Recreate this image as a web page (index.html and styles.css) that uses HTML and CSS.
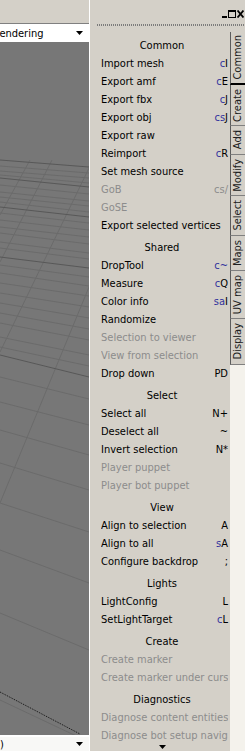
FILE: index.html
```html
<!DOCTYPE html>
<html lang="en">
<head>
<meta charset="UTF-8" />
<meta name="viewport" content="width=device-width, initial-scale=1" />
<title>Editor tools</title>
<link rel="stylesheet" href="styles.css">
</head>
<body>
<div class="app">

  <div class="viewside">
    <div class="topgap"></div>
    <div class="combo combo-top">
      <span class="combo-text scrolled">Rendering</span>
      <svg class="combo-arrow" width="7" height="4" viewBox="0 0 7 4"><path d="M0 0h7L3.5 4z" fill="#000"/></svg>
    </div>

    <div class="viewport">
      <svg width="89" height="693" viewBox="0 42 89 693">
        <g stroke="#6b6b6b" stroke-width="1" fill="none">
          <line x1="0" y1="166" x2="89" y2="173"/>
          <line x1="0" y1="171" x2="89" y2="178"/>
          <line x1="0" y1="175" x2="89" y2="183"/>
          <line x1="0" y1="185" x2="89" y2="194"/>
          <line x1="0" y1="192" x2="89" y2="201"/>
          <line x1="0" y1="197" x2="89" y2="206"/>
          <line x1="0" y1="202" x2="89" y2="212"/>
          <line x1="0" y1="213" x2="89" y2="223"/>
          <line x1="0" y1="220" x2="89" y2="230"/>
          <line x1="0" y1="227" x2="89" y2="237"/>
          <line x1="0" y1="233" x2="89" y2="244"/>
          <line x1="0" y1="242" x2="89" y2="253"/>
          <line x1="0" y1="248" x2="89" y2="259"/>
          <line x1="0" y1="265" x2="89" y2="277"/>
          <line x1="0" y1="273" x2="89" y2="286"/>
          <line x1="0" y1="283" x2="89" y2="296"/>
          <line x1="0" y1="293" x2="89" y2="307"/>
          <line x1="0" y1="303" x2="89" y2="318"/>
          <line x1="0" y1="313" x2="89" y2="329"/>
          <line x1="0" y1="323" x2="89" y2="340"/>
          <line x1="0" y1="337" x2="89" y2="355"/>
          <line x1="0" y1="347" x2="89" y2="366"/>
          <line x1="0" y1="377" x2="89" y2="399"/>
          <line x1="0" y1="402" x2="89" y2="425"/>
          <line x1="0" y1="430" x2="89" y2="455"/>
          <line x1="0" y1="463" x2="89" y2="490"/>
          <line x1="0" y1="503" x2="89" y2="532"/>
          <line x1="0" y1="550" x2="89" y2="583"/>
          <line x1="0" y1="613" x2="89" y2="650"/>
          <line x1="0" y1="700" x2="89" y2="742"/>
          <line x1="30" y1="160" x2="0" y2="215"/>
          <line x1="52" y1="160" x2="0" y2="262"/>
          <line x1="89" y1="168" x2="0" y2="352"/>
          <line x1="89" y1="287" x2="0" y2="503"/>
        </g>
        <g stroke="#585858" stroke-width="1" fill="none">
          <line x1="0" y1="160" x2="89" y2="167"/>
          <line x1="0" y1="178" x2="89" y2="187"/>
          <line x1="0" y1="207" x2="89" y2="217"/>
          <line x1="0" y1="257" x2="89" y2="268"/>
          <line x1="0" y1="355" x2="89" y2="377"/>
        </g>
        <line x1="0" y1="692" x2="80" y2="734" stroke="#111" stroke-width="1" stroke-dasharray="1 1"/>
      </svg>
    </div>

    <div class="combo combo-bottom">
      <span class="combo-text">)</span>
      <svg class="combo-arrow" width="7" height="4" viewBox="0 0 7 4"><path d="M0 0h7L3.5 4z" fill="#000"/></svg>
    </div>
  </div>

  <div class="toolside">
    <div class="titlebar">
      <svg width="22" height="8" viewBox="0 0 22 8">
        <rect x="0" y="6" width="5" height="2" fill="#000"/>
        <rect x="6.5" y="0.5" width="7" height="7" fill="none" stroke="#000"/>
        <rect x="6" y="0" width="8" height="2" fill="#000"/>
        <path d="M15.5 0.5l6 7M21.5 0.5l-6 7" stroke="#000" stroke-width="1.8"/>
      </svg>
    </div>
    <div class="gripper"></div>

    <div class="toolbody">
      <div class="panel">
        <div class="group-title">Common</div>
        <div class="item"><span class="label">Import mesh</span><span class="key"><i>c</i>I</span></div>
        <div class="item"><span class="label">Export amf</span><span class="key"><i>c</i>E</span></div>
        <div class="item"><span class="label">Export fbx</span><span class="key"><i>c</i>J</span></div>
        <div class="item"><span class="label">Export obj</span><span class="key"><i>cs</i>J</span></div>
        <div class="item"><span class="label">Export raw</span></div>
        <div class="item"><span class="label">Reimport</span><span class="key"><i>c</i>R</span></div>
        <div class="item"><span class="label">Set mesh source</span></div>
        <div class="item off"><span class="label">GoB</span><span class="key"><i>cs</i>/</span></div>
        <div class="item off"><span class="label">GoSE</span></div>
        <div class="item"><span class="label">Export selected vertices</span></div>

        <div class="group-title">Shared</div>
        <div class="item"><span class="label">DropTool</span><span class="key"><i>c~</i></span></div>
        <div class="item"><span class="label">Measure</span><span class="key"><i>c</i>Q</span></div>
        <div class="item"><span class="label">Color info</span><span class="key"><i>sa</i>I</span></div>
        <div class="item"><span class="label">Randomize</span></div>
        <div class="item off"><span class="label">Selection to viewer</span></div>
        <div class="item off"><span class="label">View from selection</span></div>
        <div class="item"><span class="label">Drop down</span><span class="key">PD</span></div>

        <div class="group-title">Select</div>
        <div class="item"><span class="label">Select all</span><span class="key">N+</span></div>
        <div class="item"><span class="label">Deselect all</span><span class="key">~</span></div>
        <div class="item"><span class="label">Invert selection</span><span class="key">N*</span></div>
        <div class="item off"><span class="label">Player puppet</span></div>
        <div class="item off"><span class="label">Player bot puppet</span></div>

        <div class="group-title">View</div>
        <div class="item"><span class="label">Align to selection</span><span class="key">A</span></div>
        <div class="item"><span class="label">Align to all</span><span class="key"><i>s</i>A</span></div>
        <div class="item"><span class="label">Configure backdrop</span><span class="key">;</span></div>

        <div class="group-title">Lights</div>
        <div class="item"><span class="label">LightConfig</span><span class="key">L</span></div>
        <div class="item"><span class="label">SetLightTarget</span><span class="key"><i>c</i>L</span></div>

        <div class="group-title">Create</div>
        <div class="item off"><span class="label">Create marker</span></div>
        <div class="item off"><span class="label">Create marker under cursor</span></div>

        <div class="group-title">Diagnostics</div>
        <div class="item off"><span class="label">Diagnose content entities</span></div>
        <div class="item off"><span class="label">Diagnose bot setup navigation</span></div>

        <div class="more">
          <svg width="7" height="4" viewBox="0 0 7 4"><path d="M0 0h7L3.5 4z" fill="#000"/></svg>
        </div>
      </div>

      <div class="tabs">
        <div class="tab active"><span>Common</span></div>
        <div class="tab"><span>Create</span></div>
        <div class="tab"><span>Add</span></div>
        <div class="tab"><span>Modify</span></div>
        <div class="tab"><span>Select</span></div>
        <div class="tab"><span>Maps</span></div>
        <div class="tab"><span>UV map</span></div>
        <div class="tab"><span>Display</span></div>
      </div>
    </div>
  </div>

</div>
</body>
</html>
```

FILE: styles.css
```css
body {
  margin: 0;
  background: #d4d0c8;
  font-family: "DejaVu Sans Condensed", "DejaVu Sans", sans-serif;
  font-stretch: condensed;
  font-size: 11px;
  color: #000;
  overflow: hidden;
}
.app {
  display: flex;
  width: 245px;
  height: 751px;
}

/* left side: viewport with its two combos */
.viewside {
  width: 89px;
  flex: none;
  border-right: 1px solid #fff;
  display: flex;
  flex-direction: column;
}
.topgap {
  height: 23px;
}
.combo {
  display: flex;
  align-items: center;
  justify-content: space-between;
  background: #fff;
  padding-right: 6px;
  overflow: hidden;
  white-space: nowrap;
}
.combo-top {
  height: 18px;
  border-top: 1px solid #808080;
}
.combo-bottom {
  height: 14px;
  border-top: 2px solid #fff;
  background: #f8f8f6;
}
.combo-text.scrolled {
  margin-left: -7px;
}
.combo-arrow {
  flex: none;
}
.viewport {
  flex: 1;
  background: #777777;
  overflow: hidden;
}
.viewport svg {
  display: block;
}

/* right side: tool panel */
.toolside {
  flex: 1;
  min-width: 0;
  display: flex;
  flex-direction: column;
}
.titlebar {
  height: 24px;
  box-sizing: border-box;
  padding: 10px 1px 0 0;
  display: flex;
  justify-content: flex-end;
  align-items: flex-start;
}
.gripper {
  height: 2px;
  margin-left: 7px;
  background: repeating-linear-gradient(90deg, #7c7c7c 0 1px, #d4d0c8 1px 2px);
}
.toolbody {
  flex: 1;
  min-height: 0;
  margin-top: 6px;
  display: flex;
}
.panel {
  width: 140px;
  flex: none;
  overflow: hidden;
}
.group-title {
  margin-top: 6px;
  height: 16px;
  line-height: 16px;
  text-align: center;
  padding-left: 4px;
}
.item {
  height: 18px;
  display: flex;
  align-items: center;
  padding: 0 2px 0 11px;
  white-space: nowrap;
}
.item .label {
  flex: 1;
  min-width: 0;
  overflow: hidden;
}
.item .key {
  flex: none;
  padding-left: 4px;
}
.key i {
  font-style: normal;
  color: #30309c;
}
.item.off {
  color: #8c8c8c;
}
.item.off .key i {
  color: inherit;
}
.more {
  display: flex;
  justify-content: center;
  padding-left: 4px;
  margin-top: 1px;
}
.more svg {
  display: block;
}

/* vertical tabs */
.tabs {
  flex: 1;
  background: #f4f2ec;
  display: flex;
  flex-direction: column;
}
.tab {
  background: #d4d0c8;
  border-left: 1px solid #5c5c5c;
  border-bottom: 1px solid #808080;
  padding: 4px 0;
  display: flex;
  justify-content: center;
  color: #202020;
}
.tab.active {
  border-bottom: 2px solid #000;
  padding: 3px 0;
}
.tab span {
  writing-mode: vertical-rl;
  transform: rotate(180deg);
  line-height: 14px;
  white-space: nowrap;
}
```
